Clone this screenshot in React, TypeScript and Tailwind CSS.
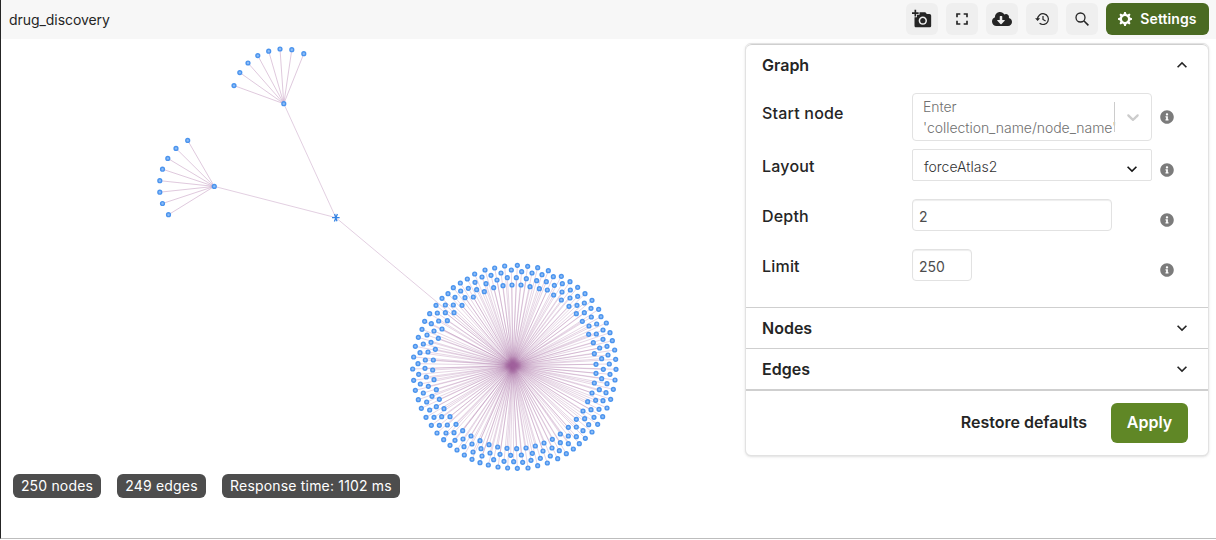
import React from "react";
import { MdAddAPhoto, MdFullscreen, MdExpandMore, MdExpandLess } from "react-icons/md";
import { FaCloudDownloadAlt, FaInfoCircle } from "react-icons/fa";

type Pt = [number, number];

// Cluster nodes by quadrant, in thirds of a pixel from the quadrant's origin.
const quadrants: { x: number; y: number; points: Pt[] }[] = [
  {
    x: 400,
    y: 255,
    points: [
      [314,33],[284,39],[255,45],[224,57],[303,54],[273,61],[246,66],[202,72],[322,68],[291,75],[181,84],[225,82],[258,86],[160,98],[205,100],[281,98],[309,92],[230,104],[253,110],[182,108],[144,116],[126,130],[165,127],[195,128],[220,126],[108,151],[136,150],[160,150],[186,151],[89,176],[112,174],[136,173],[162,173],[74,199],[94,206],[116,198],[142,197],[66,223],[126,222],[102,228],[81,240],[55,247],[115,250],[70,267],[93,262],[46,274],[106,283],[60,293],[84,291],[41,306],[76,315],[100,315],
    ],
  },
  {
    x: 510,
    y: 255,
    points: [
      [4,45],[22,31],[53,34],[83,38],[115,47],[35,50],[66,54],[96,59],[19,68],[49,71],[80,77],[109,80],[130,65],[154,64],[6,90],[33,90],[60,95],[88,101],[112,105],[133,91],[157,86],[180,80],[131,120],[156,111],[181,105],[203,97],[154,135],[180,129],[203,124],[225,116],[177,154],[201,151],[223,144],[246,136],[199,176],[223,173],[243,160],[266,163],[217,199],[244,186],[273,185],[237,213],[260,207],[289,204],[236,238],[259,237],[279,225],[300,233],[250,263],[279,253],[307,257],[269,279],[291,274],[314,285],[253,296],[294,300],[275,311],[317,313],
    ],
  },
  {
    x: 400,
    y: 360,
    points: [
      [54,11],[38,27],[75,25],[98,30],[56,43],[79,51],[102,59],[41,61],[61,72],[85,79],[109,89],[46,91],[70,99],[96,109],[55,119],[80,126],[118,118],[64,145],[89,150],[109,140],[132,146],[78,172],[102,172],[125,170],[150,170],[94,196],[118,196],[142,195],[168,193],[111,219],[138,219],[162,218],[188,212],[131,239],[165,241],[189,237],[213,228],[150,256],[192,260],[216,252],[240,242],[171,270],[219,276],[243,266],[267,254],[193,285],[216,298],[246,288],[270,279],[293,261],[240,308],[281,299],[300,283],[321,265],[265,315],[294,321],[312,304],[323,324],
    ],
  },
  {
    x: 510,
    y: 360,
    points: [
      [258,13],[298,12],[280,28],[318,28],[258,40],[300,43],[275,56],[315,60],[253,69],[291,71],[268,89],[310,88],[246,99],[288,98],[233,125],[257,121],[279,122],[302,118],[219,153],[243,149],[267,148],[291,144],[199,178],[224,176],[252,172],[278,170],[175,202],[199,201],[236,194],[263,193],[219,212],[246,216],[151,222],[175,228],[199,230],[226,235],[127,238],[151,248],[175,251],[208,251],[102,249],[126,264],[148,272],[190,267],[76,258],[99,273],[169,281],[48,264],[67,280],[121,288],[143,296],[20,266],[34,285],[91,295],[112,309],[2,286],[63,301],[83,317],[11,305],[38,307],[54,324],[22,325],
    ],
  },
];

const cluster: Pt[] = quadrants.flatMap((q) =>
  q.points.map(([x, y]): Pt => [q.x + x / 3, q.y + y / 3]),
);
const hub: Pt = [512.8, 365.5];
const root: Pt = [335.8, 217.6];
const topHub: Pt = [283.8, 103.7];
const leftHub: Pt = [214.3, 186.4];
const topFan: Pt[] = [[234,85.6],[239.8,72.6],[248,63],[257.8,55.6],[268.7,51.2],[280,49],[291.8,49.7],[303.8,53.7]];
const leftFan: Pt[] = [[187.7,140.4],[176,148.4],[167.8,158.4],[162.5,169.2],[159.8,180.7],[159.8,192.2],[162.5,203.5],[168.5,214.7]];

function Edges({ from, to, opacity }: { from: Pt; to: Pt[]; opacity: number }) {
  return (
    <g stroke="#a0609c" strokeWidth="1">
      {to.map(([x, y], i) => (
        <line key={i} x1={from[0]} y1={from[1]} x2={x} y2={y} strokeOpacity={opacity} />
      ))}
    </g>
  );
}

function Dots({ points }: { points: Pt[] }) {
  return (
    <g fill="#8dbcf5" stroke="#4b94ee" strokeWidth="1.4">
      {points.map(([x, y], i) => (
        <circle key={i} cx={x} cy={y} r="1.9" />
      ))}
    </g>
  );
}

function GraphCanvas() {
  return (
    <svg className="block h-[540px] w-[740px]" viewBox="0 0 740 540">
      <defs>
        <radialGradient id="core">
          <stop offset="0" stopColor="#a0609c" stopOpacity="0.9" />
          <stop offset="0.4" stopColor="#a0609c" stopOpacity="0.45" />
          <stop offset="1" stopColor="#a0609c" stopOpacity="0" />
        </radialGradient>
      </defs>
      <Edges from={root} to={[topHub, leftHub, hub]} opacity={0.3} />
      <Edges from={topHub} to={topFan} opacity={0.34} />
      <Edges from={leftHub} to={leftFan} opacity={0.34} />
      <Edges from={hub} to={cluster} opacity={0.26} />
      <circle cx={hub[0]} cy={hub[1]} r="9" fill="url(#core)" />
      <Dots points={[...topFan, topHub, ...leftFan, leftHub, ...cluster]} />
      <g stroke="#3584e4" strokeWidth="1.3">
        <path d="M332 217.6h7.6M334.6 214l2.4 7.2M337.4 214l-3 7.4" />
      </g>
    </svg>
  );
}

function GearIcon() {
  return (
    <svg className="size-3.5" viewBox="0 0 14 14" fill="currentColor">
      <path fillRule="evenodd" d="M14 7.77V6.17L12.06 5.53 11.61 4.44 12.49 2.6 11.36 1.47 9.55 2.38 8.46 1.93 7.77.01H6.17L5.54 1.95 4.43 2.4 2.59 1.52 1.46 2.65 2.37 4.46 1.92 5.55 0 6.23V7.82L1.94 8.46 2.39 9.55 1.51 11.39 2.64 12.52 4.45 11.61 5.54 12.06 6.23 13.98H7.82L8.45 12.04 9.56 11.59 11.4 12.47 12.53 11.34 11.61 9.53 12.08 8.44 14 7.75ZM7 10C5.34 10 4 8.66 4 7S5.34 4 7 4s3 1.34 3 3-1.34 3-3 3Z" />
    </svg>
  );
}

function HistoryIcon() {
  return (
    <svg className="size-4" viewBox="0 0 16 16" fill="none" stroke="currentColor" strokeWidth="1.2">
      <path d="M3.6 8.2A5.4 5.4 0 1 1 5.6 12.3" />
      <path d="M9 5v3.4l2.6 1.5" />
      <path d="M1.1 7.2h5L3.6 9.9z" fill="currentColor" stroke="none" />
    </svg>
  );
}

function SearchIcon() {
  return (
    <svg className="size-4" viewBox="0 0 16 16" fill="none" stroke="currentColor" strokeWidth="1.3">
      <circle cx="6.5" cy="6.5" r="4.5" />
      <path d="M9.8 9.8l4.6 4.6" strokeWidth="1.6" />
    </svg>
  );
}

function SelectChevron() {
  return (
    <svg className="size-5" viewBox="0 0 20 20" fill="currentColor">
      <path d="M4.516 7.548c0.436-0.446 1.043-0.481 1.576 0l3.908 3.747 3.908-3.747c0.533-0.481 1.141-0.446 1.574 0 0.436 0.445 0.408 1.197 0 1.615-0.406 0.418-4.695 4.502-4.695 4.502-0.217 0.223-0.502 0.335-0.787 0.335s-0.57-0.112-0.789-0.335c0 0-4.287-4.084-4.695-4.502s-0.436-1.17 0-1.615z" />
    </svg>
  );
}

function ToolButton({ children }: { children: React.ReactNode }) {
  return (
    <button className="flex size-8 items-center justify-center rounded-md bg-[#efefef] text-[#252525]">
      {children}
    </button>
  );
}

function Field({ label, labelClass, infoClass, children }: { label: string; labelClass: string; infoClass: string; children: React.ReactNode }) {
  return (
    <div className="flex items-start">
      <label className={`w-[150px] text-base leading-6 font-medium tracking-[0.2px] ${labelClass}`}>{label}</label>
      <div className="w-[248px]">{children}</div>
      <FaInfoCircle className={`size-3.5 text-[#7b7b7b] ${infoClass}`} />
    </div>
  );
}

function Section({ title }: { title: string }) {
  return (
    <div className="flex h-[41px] items-center justify-between border-t border-[#cfcfcf] px-4">
      <h2 className="text-base font-semibold">{title}</h2>
      <MdExpandMore className="size-5" />
    </div>
  );
}

function Badge({ children, className }: { children: string; className: string }) {
  return (
    <span className={`flex h-6 items-center justify-center rounded-md bg-[#4d4d4d] text-sm tracking-[0.18px] whitespace-nowrap text-white ${className}`}>
      {children}
    </span>
  );
}

export default function App() {
  return (
    <div className="relative h-[540px] w-[1216px] overflow-hidden bg-white font-['Inter',sans-serif] text-[#252525]">
      <div className="absolute inset-0">
        <GraphCanvas />
      </div>
      <div className="relative flex h-[539px] flex-col border-b border-l border-b-[#bdbdbd] border-l-[#252525]">
        <header className="flex h-[39px] shrink-0 items-start justify-between bg-[#f7f7f7] pt-[3px] pr-[7px] pl-2">
          <span className="pt-[7px] text-sm leading-5 tracking-[-0.06px]">drug_discovery</span>
          <div className="flex gap-2">
            <ToolButton><MdAddAPhoto className="size-5" /></ToolButton>
            <ToolButton><MdFullscreen className="size-5" /></ToolButton>
            <ToolButton><FaCloudDownloadAlt className="size-5" /></ToolButton>
            <ToolButton><HistoryIcon /></ToolButton>
            <ToolButton><SearchIcon /></ToolButton>
            <button className="flex h-8 w-[103px] items-center justify-center gap-2 rounded-md bg-[#4a6a22] text-sm font-semibold tracking-[0.1px] text-white">
              <GearIcon />
              Settings
            </button>
          </div>
        </header>
        <section className="mt-1 mr-[7px] h-[413px] w-[464px] self-end rounded-md border border-[#e2e2e2] bg-white shadow-sm">
          <div className="flex h-[42px] items-center justify-between rounded-t-md border-t border-[#cfcfcf] px-4 pb-0.5">
            <h2 className="text-base font-semibold">Graph</h2>
            <MdExpandLess className="size-5" />
          </div>
          <div className="flex h-[221px] flex-col px-4 pt-[7px]">
            <div className="h-14">
              <Field label="Start node" labelClass="pt-[8px]" infoClass="mt-[17px]">
                <div className="flex h-12 w-60 items-center rounded border border-[#e2e2e2]">
                  <div className="w-[201px] pl-2.5 text-sm leading-[21px] font-light tracking-[-0.04px] whitespace-nowrap text-[#707070]">
                    Enter<br />'collection_name/node_name'
                  </div>
                  <div className="h-[30px] w-px bg-[#cccccc]" />
                  <div className="flex flex-1 justify-center text-[#cccccc]"><SelectChevron /></div>
                </div>
              </Field>
            </div>
            <div className="h-[50px]">
              <Field label="Layout" labelClass="pt-[5px]" infoClass="mt-[14px]">
                <div className="flex h-8 w-60 items-center justify-between rounded-xs border border-[#e2e2e2] pr-[9px] pl-[11px] text-sm font-light text-[#333333]">
                  <span className="pt-1">forceAtlas2</span>
                  <MdExpandMore className="mt-2 size-5 text-[#151515]" />
                </div>
              </Field>
            </div>
            <div className="h-[50px]">
              <Field label="Depth" labelClass="pt-[5px]" infoClass="mt-[14px]">
                <input className="block h-8 w-[200px] rounded border border-[#e2e2e2] px-1.5 pt-0.5 text-sm text-[#4d4d4d] shadow-[inset_0_1px_1px_#eeeeee]" defaultValue="2" />
              </Field>
            </div>
            <Field label="Limit" labelClass="pt-[5px]" infoClass="mt-[14px]">
              <input className="block h-8 w-[60px] rounded border border-[#e2e2e2] px-1.5 pt-0.5 text-sm text-[#4d4d4d] shadow-[inset_0_1px_1px_#eeeeee]" defaultValue="250" />
            </Field>
          </div>
          <Section title="Nodes" />
          <Section title="Edges" />
          <div className="flex h-[66px] items-center justify-end gap-6 border-t-2 border-[#cfcfcf] pr-5">
            <button className="pb-0.5 text-base font-semibold">Restore defaults</button>
            <button className="h-10 w-[77px] rounded-md bg-[#608726] pb-0.5 text-base font-semibold text-white">Apply</button>
          </div>
        </section>
        <div className="mt-[18px] ml-3 flex gap-4">
          <Badge className="w-[88px]">250 nodes</Badge>
          <Badge className="w-[89px]">249 edges</Badge>
          <Badge className="w-[178px]">Response time: 1102 ms</Badge>
        </div>
      </div>
    </div>
  );
}
